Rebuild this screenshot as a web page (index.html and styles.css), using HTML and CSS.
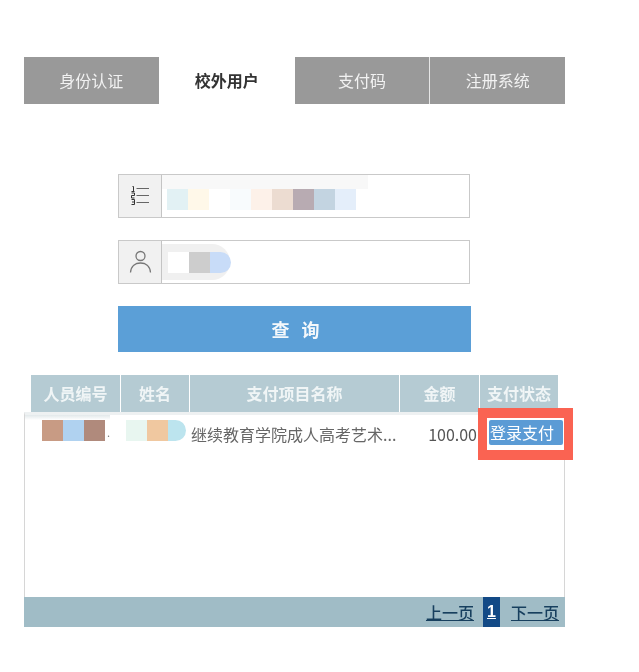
FILE: index.html
```html
<!DOCTYPE html>
<html lang="zh-CN">
<head>
<meta charset="utf-8">
<title>校外用户</title>
<link rel="stylesheet" href="styles.css">
</head>
<body>
<main class="page">
  <nav class="tabs">
    <a class="tab">身份认证</a>
    <a class="tab tab-active">校外用户</a>
    <a class="tab">支付码</a>
    <a class="tab tab-split">注册系统</a>
  </nav>

  <form class="form">
    <div class="field">
      <span class="addon">
        <svg class="icon" viewBox="0 0 20 20" width="20" height="20" fill="none" stroke="#666">
          <path d="M6.500 2.500H19M6.500 9.500H19M6.500 16.500H19" stroke-width="1"/>
          <path d="M2.500 0.500h1v4.500M1.500 5.500h3M1.500 7h3v2.500h-3V12h3M1.500 13.500h3v5h-3M2 16h2.500" stroke="#333" stroke-width="1"/>
        </svg>
      </span>
      <span class="value value-id">
        <i class="swatch s1"></i><i class="swatch s2"></i><i class="swatch s3"></i><i class="swatch s4"></i><i class="swatch s5"></i><i class="swatch s6"></i><i class="swatch s7"></i><i class="swatch s8"></i><i class="swatch s9"></i>
      </span>
    </div>
    <div class="field">
      <span class="addon">
        <svg class="icon" viewBox="0 0 24 24" width="24" height="24" fill="none" stroke="#777" stroke-width="1.300">
          <circle cx="12.500" cy="6" r="4.500"/>
          <path d="M2.500 22.500C3 16 7.500 13 12.500 13s9.500 3 10 9.500"/>
        </svg>
      </span>
      <span class="value value-name">
        <i class="swatch s10"></i><i class="swatch s11"></i><i class="swatch s12 end"></i>
      </span>
    </div>
    <button class="submit" type="button">查 询</button>
  </form>

  <section class="results">
    <div class="thead">
      <span class="th c-id">人员编号</span>
      <span class="th c-name">姓名</span>
      <span class="th c-item">支付项目名称</span>
      <span class="th c-amount">金额</span>
      <span class="th c-status">支付状态</span>
    </div>
    <div class="tbody">
      <div class="row">
        <span class="cell-id"><i class="swatch s13"></i><i class="swatch s14"></i><i class="swatch s15"></i><em class="dot">.</em></span>
        <span class="cell-name"><i class="swatch s16"></i><i class="swatch s17"></i><i class="swatch s18 end"></i></span>
        <span class="cell-item">继续教育学院成人高考艺术...</span>
        <span class="cell-amount">100.00</span>
        <span class="cell-status"><a class="pay">登录支付</a></span>
      </div>
      <div class="highlight"></div>
    </div>
    <div class="pager">
      <a class="page-link">上一页</a>
      <a class="page-current">1</a>
      <a class="page-link">下一页</a>
    </div>
  </section>
</main>
</body>
</html>
```
FILE: styles.css
```css
* { box-sizing: border-box; }
html, body { margin: 0; padding: 0; background: #fff; }
body {
  font-family: "Noto Sans CJK SC", "Liberation Sans", sans-serif;
  color: #555;
}
.page {
  width: 541px;
  margin-left: 24px;
  padding-top: 57px;
  filter: blur(0.35px);
}
.swatch { display: block; width: 21px; height: 21px; flex: none; }

/* tabs */
.tabs { display: flex; height: 47px; }
.tab {
  flex: 1 1 0;
  display: flex;
  align-items: center;
  justify-content: center;
  padding-bottom: 2px;
  background: #999;
  color: #f2f2f2;
  font-size: 16px;
  line-height: 1;
}
.tab-active { flex: none; width: 136px; background: #fff; color: #333; font-weight: 700; }
.tab-split { border-left: 1px solid #e6e6e6; }

/* form */
.form { width: 353px; margin: 70px 0 0 94px; }
.field {
  display: flex;
  width: 352px;
  height: 44px;
  margin-bottom: 22px;
  border: 1px solid #c9c9c9;
  background: #fff;
}
.addon {
  flex: none;
  width: 43px;
  display: flex;
  align-items: center;
  justify-content: center;
  background: #f1f1f1;
  border-right: 1px solid #c4c4c4;
}
.value { display: flex; align-items: flex-start; padding-left: 5px; }
.value-id {
  width: 206px;
  padding-top: 14px;
  background: linear-gradient(#f8f8f8 0 14px, #fff 14px);
}
.value-name {
  width: 68px;
  height: 36px;
  margin-top: 3px;
  padding: 8px 0 0 6px;
  border-radius: 0 18px 18px 0;
  background: #f0f0f0;
}
.end { border-radius: 0 11px 11px 0; }
.s1 { background: #e2f1f4; }
.s2 { background: #fff8e9; }
.s3 { background: #fff; }
.s4 { background: #f8fbfd; }
.s5 { background: #fdf1e9; }
.s6 { background: #ecdcd1; }
.s7 { background: #b8abb2; }
.s8 { background: #c3d4e1; }
.s9 { background: #e4eefa; }
.s10 { background: #fff; }
.s11 { background: #cdcdcd; }
.s12 { background: #c8dcf8; }
.s13 { background: #c89b84; }
.s14 { background: #b0d2f0; }
.s15 { background: #b08a7c; }
.s16 { background: #e8f6f0; }
.s17 { background: #f0c8a0; }
.s18 { width: 18px; background: #bce4ee; }
.submit {
  display: block;
  width: 353px;
  height: 46px;
  border: 0;
  padding: 0 0 0 6px;
  background: #5b9fd7;
  color: #f4f8fb;
  font: 700 18px "Noto Sans CJK SC", sans-serif;
  letter-spacing: 4px;
}

/* results */
.results { margin-top: 23px; }
.thead { display: flex; gap: 1px; height: 37px; margin: 0 7px; }
.th {
  display: flex;
  align-items: center;
  justify-content: center;
  padding-bottom: 1px;
  background: #b5cbd3;
  color: #f0f5f6;
  font-size: 16px;
  font-weight: 700;
}
.c-id { width: 89px; }
.c-name { width: 68px; }
.c-item { width: 209px; }
.c-amount { width: 79px; }
.c-status { width: 78px; }
.tbody {
  position: relative;
  height: 185px;
  border: 1px solid #d6d6d6;
  border-top: 3px solid #eef1f2;
  border-bottom: 0;
}
.row { display: flex; align-items: flex-start; font-size: 16px; white-space: nowrap; }
.cell-id {
  display: flex;
  align-items: flex-start;
  width: 101px;
  height: 26px;
  padding: 5px 0 0 17px;
  background: linear-gradient(#e2e8ea, #fff) no-repeat 0 0 / 85px 5px;
}
.dot { font-style: normal; line-height: 24px; margin-left: 2px; font-size: 11px; color: #777; }
.cell-name { display: flex; width: 65px; height: 26px; padding-top: 5px; }
.cell-item { width: 222px; line-height: 24px; margin-top: 7px; color: #666; }
.cell-amount { width: 64px; line-height: 24px; margin-top: 7px; text-align: right; }
.cell-status { padding: 5px 0 0 12px; }
.pay {
  display: block;
  width: 74px;
  height: 25px;
  padding-left: 1px;
  line-height: 24px;
  background: #5b9bd5;
  color: #fff;
  font-size: 16px;
  border-radius: 2px;
}
.highlight {
  position: absolute;
  left: 453px;
  top: -7px;
  width: 95px;
  height: 52px;
  border: solid #fa6352;
  border-width: 10px 9px;
}

/* pager */
.pager {
  display: flex;
  align-items: center;
  justify-content: flex-end;
  gap: 9px;
  height: 30px;
  padding-right: 6px;
  background: #a0bcc6;
}
.page-link { font-size: 16px; font-weight: 500; text-decoration: underline; color: #173f5e; }
.page-current {
  width: 17px;
  height: 30px;
  margin-right: 2px;
  text-align: center;
  background: #134a86;
  color: #fff;
  font: 700 16px/30px "Liberation Sans", sans-serif;
  text-decoration: underline;
}
```
